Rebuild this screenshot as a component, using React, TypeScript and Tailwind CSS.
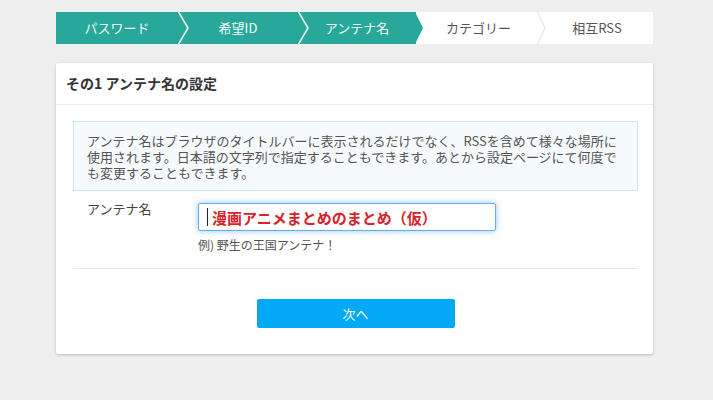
import React from 'react';

const steps = [
  { label: 'パスワード', w: 'w-[122px]', done: true },
  { label: '希望ID', w: 'w-[120px]', done: true },
  { label: 'アンテナ名', w: 'w-[118px]', done: true },
  { label: 'カテゴリー', w: 'w-[125px]', done: false },
  { label: '相互RSS', w: 'w-[112px]', done: false },
];

function Steps() {
  return (
    <div className="relative flex h-[32px] bg-white text-[13px]">
      {steps.map((s) => (
        <div
          key={s.label}
          className={`${s.w} flex items-center justify-center ${s.done ? 'bg-[#28a79b] text-[#f4fbfa]' : 'text-[#555]'}`}
        >
          {s.label}
        </div>
      ))}
      <svg className="absolute left-0 top-0" width="597" height="32" viewBox="0 0 597 32">
        <polyline points="122,-1 132,16 122,33" fill="none" stroke="#e9f6f4" strokeWidth="1.6" />
        <polyline points="242,-1 252,16 242,33" fill="none" stroke="#e9f6f4" strokeWidth="1.6" />
        <polygon points="359,0 367,16 359,32" fill="#28a79b" />
        <polyline points="481,-1 489,16 481,33" fill="none" stroke="#e6e6e6" strokeWidth="1.2" />
      </svg>
    </div>
  );
}

export default function App() {
  return (
    <div
      className="min-h-screen bg-[#efeeef] pt-3 pb-10"
      style={{ fontFamily: '"Noto Sans CJK JP", "Noto Sans", sans-serif' }}
    >
      <div className="ml-[56px] w-[597px]">
        <Steps />

        <div className="mt-[19px] bg-white rounded-[2px] shadow-[0_1px_3px_rgba(0,0,0,0.22)]">
          <div className="h-[42px] px-[10px] flex items-center border-b border-[#ebebeb] text-[14px] font-bold text-[#333]">
            その1 アンテナ名の設定
          </div>

          <div className="pl-[17px] pr-[15px] pt-[16px] pb-[26px]">
            <div className="border border-[#cde8ee] bg-[#f5fbfd] pt-[11px] pb-[9px] px-[13px] text-[13px] leading-[16px] text-[#555]">
              アンテナ名はブラウザのタイトルバーに表示されるだけでなく、RSSを含めて様々な場所に
              <br />
              使用されます。日本語の文字列で指定することもできます。あとから設定ページにて何度で
              <br />
              も変更することもできます。
            </div>

            <div className="mt-[12px] flex">
              <div className="w-[125px] pl-[14px] -mt-[1px] text-[13px] leading-[14px] text-[#444]">
                アンテナ名
              </div>
              <div>
                <div className="h-[28px] w-[298px] flex items-center rounded-[2px] border border-[#66afe9] bg-white shadow-[0_0_6px_rgba(102,175,233,0.7)] pl-[8px]">
                  <span className="h-[18px] border-l border-[#222] mr-[4px]" />
                  <span className="text-[15px] font-bold text-[#d9232b] leading-none">
                    漫画アニメまとめのまとめ（仮）
                  </span>
                </div>
                <div className="mt-[6px] text-[12px] leading-[16px] text-[#555]">例) 野生の王国アンテナ！</div>
              </div>
            </div>

            <div className="mt-[15px] h-px bg-[#e6e6e6]" />

            <div className="mt-[30px] flex justify-center">
              <button className="h-[29px] w-[198px] rounded-[2px] bg-[#03a9f4] text-[13px] text-white">
                次へ
              </button>
            </div>
          </div>
        </div>
      </div>
    </div>
  );
}
